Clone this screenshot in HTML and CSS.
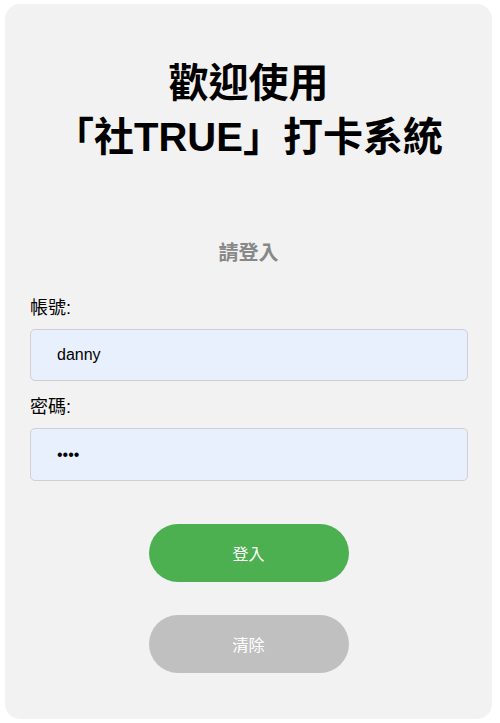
FILE: index.html
```html
<!DOCTYPE html>
<html lang="zh-Hant">
<head>
<meta charset="utf-8">
<title>社TRUE 打卡系統</title>
<link rel="stylesheet" href="styles.css">
</head>
<body>
<div class="card">
  <h1 class="title">歡迎使用<br>「社TRUE」打卡系統</h1>
  <h2 class="subtitle">請登入</h2>
  <form class="form">
    <label class="label" for="user">帳號:</label>
    <input class="input" id="user" type="text" value="danny">
    <label class="label label-second" for="pass">密碼:</label>
    <input class="input input-pass" id="pass" type="password" value="1234">
    <div class="actions">
      <button type="button" class="btn btn-login">登入</button>
      <button type="button" class="btn btn-clear">清除</button>
    </div>
  </form>
</div>
</body>
</html>
```

FILE: styles.css
```css
* { box-sizing: border-box; }
html, body { background: #ffffff; }
body {
  margin: 0;
  padding: 4px 8px 4px 5px;
  font-family: "Liberation Sans", Arial, "Noto Sans CJK TC", sans-serif;
}
.card {
  width: 487px;
  height: 715px;
  background: #f2f2f2;
  border-radius: 15px;
  padding: 52px 25px 0 25px;
}
.title {
  margin: 0;
  text-align: center;
  font-size: 40px;
  line-height: 54px;
  font-weight: bold;
  color: #000;
}
.subtitle {
  margin: 76px 0 0 0;
  text-align: center;
  font-size: 20px;
  line-height: 27px;
  font-weight: bold;
  color: #888888;
}
.form {
  display: flex;
  flex-direction: column;
  margin-top: 28px;
}
.label {
  display: block;
  font-size: 18px;
  line-height: 27px;
  color: #000;
  margin-bottom: 7px;
}
.label-second { margin-top: 13px; }
.input {
  width: 438px;
  height: 52px;
  border: 1px solid #cfcfd4;
  border-radius: 5px;
  background: #e8f0fe;
  padding: 0 26px;
  font-family: "Liberation Sans", Arial, sans-serif;
  font-size: 16px;
  color: #000;
  outline: none;
}
.input-pass { height: 53px; }
.actions {
  display: flex;
  flex-direction: column;
  align-items: center;
  gap: 33px;
  margin-top: 43px;
}
.btn {
  width: 200px;
  height: 58px;
  border: none;
  border-radius: 29px;
  color: #ffffff;
  font-family: "Liberation Sans", Arial, "Noto Sans CJK TC", sans-serif;
  font-size: 16px;
  cursor: pointer;
}
.btn-login { background: #4caf50; }
.btn-clear { background: #c0c0c0; }
```
